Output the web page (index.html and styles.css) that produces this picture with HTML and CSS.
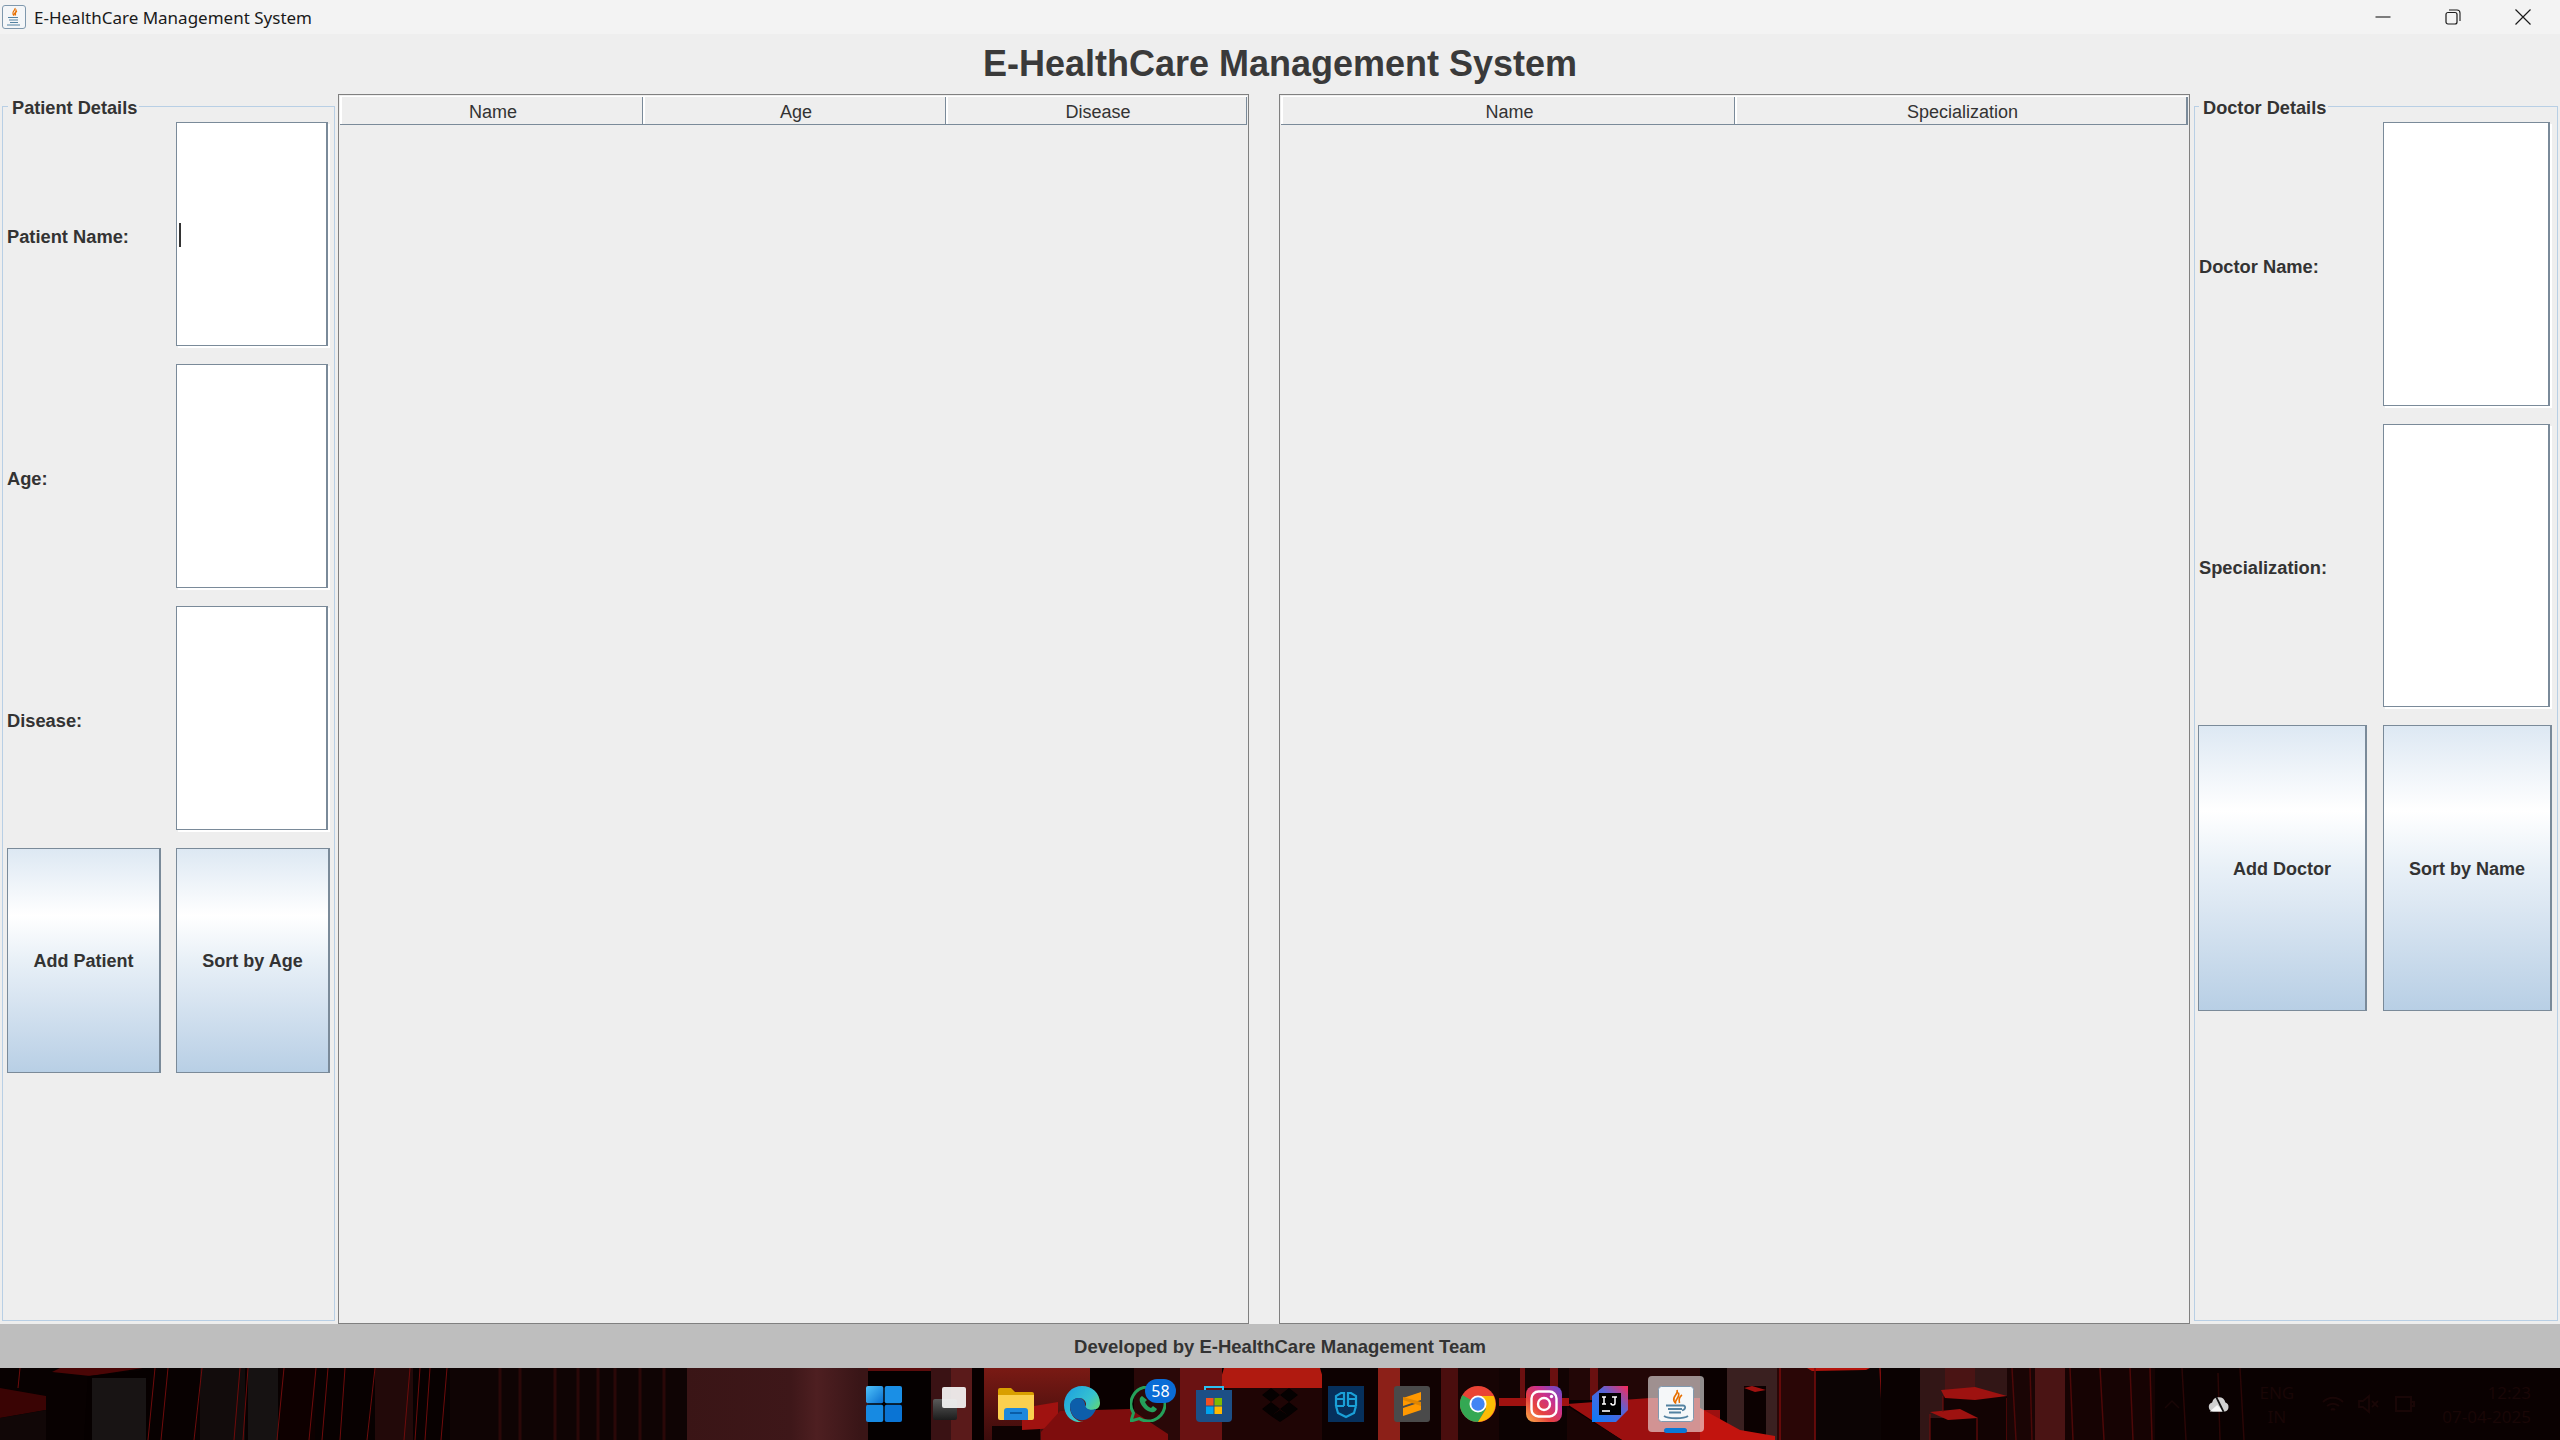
FILE: index.html
```html
<!DOCTYPE html>
<html lang="en">
<head>
<meta charset="utf-8">
<title>E-HealthCare Management System</title>
<link rel="stylesheet" href="styles.css">
</head>
<body>
<div class="window">
  <header class="titlebar">
    <div class="title-left">
      <svg class="app-icon" viewBox="0 0 24 24"><rect x=".5" y=".5" width="23" height="23" rx="2.500" fill="#f4f6f8" stroke="#7f98ad" stroke-width="1"/><path d="M13 3c1 2-3 3-2 6 .3 1 1 1.500 1 1.500-1-2 3-3 2-6M15 6c-2 1-2 2-1.500 4.500" fill="none" stroke="#e76f00" stroke-width="1.200"/><path d="M6 12.500h10M7 15h9M8 17.500h8M5 20h13" stroke="#5382a1" stroke-width="1.200"/></svg>
      <span>E-HealthCare Management System</span>
    </div>
    <div class="win-controls">
      <svg viewBox="0 0 16 16"><path d="M.5 8h15" stroke="#1a1a1a" stroke-width="1.100"/></svg>
      <svg viewBox="0 0 16 16"><rect x="1" y="3.500" width="11" height="11.500" rx="2" fill="none" stroke="#1a1a1a" stroke-width="1.200"/><path d="M4 1h8a3 3 0 0 1 3 3v8" fill="none" stroke="#1a1a1a" stroke-width="1.100"/></svg>
      <svg viewBox="0 0 16 16"><path d="M.5.500l15 15M15.500.500l-15 15" stroke="#1a1a1a" stroke-width="1.200"/></svg>
    </div>
  </header>

  <h1 class="heading">E-HealthCare Management System</h1>

  <main class="content">
    <section class="panel panel-patient">
      <div class="legend legend-left">Patient Details</div>
      <div class="form form-patient">
        <label class="lbl">Patient Name:</label><div class="field"><i class="caret"></i></div>
        <label class="lbl">Age:</label><div class="field"></div>
        <label class="lbl">Disease:</label><div class="field"></div>
        <button class="btn">Add Patient</button><button class="btn">Sort by Age</button>
      </div>
    </section>

    <section class="table-pane">
      <div class="thead thead-3"><div class="th">Name</div><div class="th">Age</div><div class="th">Disease</div></div>
    </section>

    <section class="table-pane table-right">
      <div class="thead thead-2"><div class="th">Name</div><div class="th">Specialization</div></div>
    </section>

    <section class="panel panel-doctor">
      <div class="legend legend-right">Doctor Details</div>
      <div class="form form-doctor">
        <label class="lbl">Doctor Name:</label><div class="field"></div>
        <label class="lbl">Specialization:</label><div class="field"></div>
        <button class="btn">Add Doctor</button><button class="btn">Sort by Name</button>
      </div>
    </section>
  </main>

  <footer class="statusbar">Developed by E-HealthCare Management Team</footer>

  <div class="taskbar">
    <svg class="wallpaper" viewBox="0 0 2560 72" preserveAspectRatio="none">
      <defs>
        <linearGradient id="gA" x1="0" y1="0" x2="1" y2="0"><stop offset="0" stop-color="#3a1516"/><stop offset=".6" stop-color="#3e1719"/><stop offset=".75" stop-color="#4e1f21"/><stop offset="1" stop-color="#391517"/></linearGradient>
        <linearGradient id="gB" x1="0" y1="0" x2="0" y2="1"><stop offset="0" stop-color="#7a1a14"/><stop offset="1" stop-color="#3c0c0c"/></linearGradient>
      </defs>
      <rect width="2560" height="72" fill="#080101"/>
      <polygon points="60,0 143,0 90,8 52,4" fill="#4a0606"/>
      <polygon points="0,20 46,28 46,42 0,50" fill="#3a0404"/>
      <polygon points="0,50 46,42 46,72 0,72" fill="#110707"/>
      <polygon points="88,8 150,2 150,72 84,72" fill="#060000"/>
      <rect x="92" y="10" width="54" height="62" fill="#181414"/>
      <rect x="200" width="45" height="72" fill="#120c0c"/>
      <rect x="248" width="30" height="72" fill="#161212"/>
      <rect x="280" width="35" height="72" fill="#0e0000"/>
      <rect x="375" width="38" height="72" fill="#220909"/>
      <path d="M20 0l-2 20M155 0l-7 72M168 0l-7 72M202 0l-8 72M240 0l-6 72M248 0l-5 72M284 0l-7 72M316 0l-7 72M328 0l-6 72M345 0l-5 72M375 0l-8 72M410 0l-6 72M420 0l-5 72M430 0l-5 72M447 0l-6 72" stroke="#6e0c0c" stroke-width="1"/>
      <rect x="450" width="237" height="72" fill="#0f0404"/>
      <path d="M500 0v72M520 0v72M555 0v72M578 0v72M598 0v72M615 0v72M640 0v72M664 0v72" stroke="#2a0808" stroke-width="3"/>
      <rect x="687" width="173" height="72" fill="url(#gA)"/>
      <rect x="860" width="72" height="72" fill="#3a1516"/>
      <polygon points="868,3 931,3 931,72 868,72" fill="#050000"/>
      <polygon points="868,0 950,0 931,3 868,3" fill="#5c0c0c"/>
      <rect x="931" width="20" height="72" fill="#3a1214"/>
      <rect x="951" width="21" height="72" fill="#5a1a1a"/>
      <rect x="972" width="12" height="72" fill="#080000"/>
      <rect x="984" width="106" height="72" fill="url(#gB)"/>
      <rect x="992" y="58" width="48" height="14" fill="#0e0202"/>
      <polygon points="1022,40 1058,34 1058,60 1022,62" fill="#a01210"/>
      <rect x="1090" width="44" height="43" fill="#0a0000"/>
      <rect x="1134" width="88" height="72" fill="#2a0808"/>
      <polygon points="1041,64 1060,43 1130,41 1168,66 1168,72 1041,72" fill="#7e0d0d"/>
      <rect x="1222" y="20" width="100" height="52" fill="#1f0505"/>
      <polygon points="1224,0 1320,0 1326,20 1218,20" fill="#b01a10"/>
      <rect x="1180" width="42" height="72" fill="#6a1212"/>
      <rect x="1322" width="56" height="72" fill="#0d0101"/>
      <rect x="1378" width="22" height="72" fill="#8c2018"/>
      <rect x="1400" width="41" height="72" fill="#110202"/>
      <rect x="1441" width="17" height="72" fill="#4a0e0e"/>
      <rect x="1458" width="41" height="72" fill="#170404"/>
      <rect x="1499" width="70" height="30" fill="#120303"/>
      <rect x="1520" width="5" height="30" fill="#6a1010"/>
      <rect x="1550" width="8" height="30" fill="#6a1010"/>
      <rect x="1499" y="30" width="70" height="8" fill="#a01210"/>
      <rect x="1499" y="38" width="70" height="34" fill="#0c0202"/>
      <rect x="1569" width="81" height="32" fill="#220606"/>
      <rect x="1590" width="8" height="32" fill="#6a1010"/>
      <rect x="1650" width="50" height="32" fill="#2a0a0a"/>
      <polygon points="1567,36 1650,30 1720,30 1720,72 1622,72" fill="#9c1010"/>
      <polygon points="1567,38 1622,72 1567,72" fill="#1a0404"/>
      <rect x="1700" width="27" height="42" fill="#0a0000"/>
      <rect x="1727" width="50" height="72" fill="#3a2020"/>
      <rect x="1744" y="18" width="22" height="50" fill="#0c0101"/>
      <polygon points="1744,20 1752,18 1766,22 1755,24" fill="#a01210"/>
      <polygon points="1700,40 1740,62 1775,68 1775,72 1700,72" fill="#c2140e"/>
      <rect x="1777" width="38" height="72" fill="#2a0606"/>
      <rect x="1815" width="66" height="72" fill="#0c0404"/>
      <polygon points="1807,0 1870,0 1866,2 1812,3" fill="#b5140c"/>
      <path d="M1780 0v72M1815 0v72M1880 0l4 72" stroke="#7a0c0c" stroke-width="1.500"/>
      <rect x="1881" width="39" height="72" fill="#0a0101"/>
      <rect x="1920" width="87" height="72" fill="#321616"/>
      <rect x="1945" width="30" height="30" fill="#4a1414"/>
      <polygon points="1943,28 2007,28 2007,72 1943,72" fill="#120303"/>
      <polygon points="1941,22 1975,19 2007,28 1975,32 1945,30" fill="#9e1210"/>
      <rect x="1930" y="50" width="47" height="22" fill="#0e0202"/>
      <polygon points="1930,44 1960,41 1978,50 1948,52" fill="#9e1210"/>
      <path d="M1930 46v26M1943 28v16M2007 30v42M1977 50v22" stroke="#7a0c0c" stroke-width="1"/>
      <rect x="2007" width="28" height="72" fill="#1a0505"/>
      <rect x="2035" width="30" height="72" fill="#4a1414"/>
      <rect x="2065" width="90" height="72" fill="#160303"/>
      <path d="M2012 0l4 72M2030 0l2 72M2070 0l3 72M2100 0l4 72M2130 0l3 72M2150 0l2 72" stroke="#4c0808" stroke-width="1.500"/>
      <rect x="2155" width="405" height="72" fill="#0a0101"/>
      <path d="M2182 0l4 72M2218 5l2 67M2240 0l4 72" stroke="#2a0606" stroke-width="1.500"/>
    </svg>

    <div class="tb-icons">
      <span class="tb"><svg viewBox="0 0 36 36"><defs><linearGradient id="w" x1="0" y1="0" x2="1" y2="1"><stop offset="0" stop-color="#4fc3fa"/><stop offset="1" stop-color="#0a6fd0"/></linearGradient></defs><rect x="0" y="0" width="17.300" height="17.300" rx="2" fill="url(#w)"/><rect x="18.700" y="0" width="17.300" height="17.300" rx="2" fill="#1a8fe6"/><rect x="0" y="18.700" width="17.300" height="17.300" rx="2" fill="#178ae2"/><rect x="18.700" y="18.700" width="17.300" height="17.300" rx="2" fill="#0a74d4"/></svg></span>
      <span class="tb"><svg viewBox="0 0 36 36"><defs><linearGradient id="tv" x1="0" y1="0" x2="0" y2="1"><stop offset="0" stop-color="#5a5a5a"/><stop offset="1" stop-color="#1c1c1c"/></linearGradient></defs><rect x="1" y="13" width="24" height="21" rx="2" fill="url(#tv)"/><rect x="10" y="1" width="24" height="21" rx="2" fill="#f5f5f5" opacity=".92"/></svg></span>
      <span class="tb"><svg viewBox="0 0 36 36"><path d="M0 4a2 2 0 0 1 2-2h11l4 4h17a2 2 0 0 1 2 2v6H0z" fill="#d99f00"/><path d="M0 9h36v23a2 2 0 0 1-2 2H2a2 2 0 0 1-2-2z" fill="#fbd04f"/><path d="M6 34v-9a3 3 0 0 1 3-3h18a3 3 0 0 1 3 3v9z" fill="#1e88dc"/><path d="M12 27h12" stroke="#0a5ca6" stroke-width="2"/></svg></span>
      <span class="tb"><svg viewBox="0 0 36 36"><defs><linearGradient id="e" x1="0" y1="0" x2="1" y2=".8"><stop offset="0" stop-color="#1b9de2"/><stop offset=".6" stop-color="#35c1d0"/><stop offset="1" stop-color="#6fdc58"/></linearGradient></defs><path d="M18 0c10 0 18 7 18 17 0 5-4 7-8 7-4 0-7-1-7-3 0-1 1-1 1-3 0-3-3-6-7-6-6 0-9 5-9 9 0 8 6 15 14 15-10 2-20-5-20-17C0 8 8 0 18 0z" fill="url(#e)"/><path d="M6 20c0-5 4-8 9-8 3 0 6 3 6 6 0 5 5 7 11 5-3 8-10 12-16 11C10 33 6 27 6 20z" fill="#0d5eaa"/></svg></span>
      <span class="tb"><svg viewBox="0 0 36 36"><path d="M18 1a17 17 0 0 0-14.500 26L1 35l8.300-2.400A17 17 0 1 0 18 1z" fill="none" stroke="#25a05a" stroke-width="3"/><path d="M12 10c-2 1-3 3-2 6 2 5 6 9 11 10 3 1 5-1 6-3l-4-3-2 2c-3-1-5-4-6-6l2-2z" fill="#25a05a"/></svg><b class="badge">58</b></span>
      <span class="tb"><svg viewBox="0 0 36 36"><path d="M9 6V1h18v5" fill="none" stroke="#2bc0f0" stroke-width="2"/><path d="M0 4h36v28a4 4 0 0 1-4 4H4a4 4 0 0 1-4-4z" fill="#1c4f86"/><rect x="10" y="12" width="7.500" height="7.500" fill="#f25022"/><rect x="18.500" y="12" width="7.500" height="7.500" fill="#7fba00"/><rect x="10" y="20.500" width="7.500" height="7.500" fill="#00a4ef"/><rect x="18.500" y="20.500" width="7.500" height="7.500" fill="#ffb900"/></svg></span>
      <span class="tb"><svg viewBox="0 0 36 36"><path d="M9 2L0 9l9 7 9-7zM27 2l-9 7 9 7 9-7zM0 23l9-7 9 7-9 7zM18 23l9-7 9 7-9 7zM9 30l9-6 9 6-9 6z" fill="#050101"/></svg></span>
      <span class="tb"><svg viewBox="0 0 36 36"><rect width="36" height="36" fill="#06305c"/><path d="M8 20V10l5-3h3v13M28 20V10l-5-3h-3v13M8 20h8M20 20h8M8 20l2 7 8 4 8-4 2-7M20 13h8M8 13h8" fill="none" stroke="#1aa0d8" stroke-width="2.200"/></svg></span>
      <span class="tb"><svg viewBox="0 0 36 36"><rect width="36" height="36" rx="3" fill="#4a4a4a"/><path d="M9 12l18-6v8L9 20zM27 16l-18 6v8l18-6z" fill="#ff9800"/><path d="M9 14l18 6v-4L9 11z" fill="#e08500"/></svg></span>
      <span class="tb"><svg viewBox="0 0 36 36"><circle cx="18" cy="18" r="18" fill="#ea4335"/><path d="M18 36A18 18 0 0 1 2.400 9L18 18l8 5z" fill="#34a853"/><path d="M18 10h15.600A18 18 0 0 1 18 36l8-13z" fill="#fbbc05"/><circle cx="18" cy="18" r="8.500" fill="#fff"/><circle cx="18" cy="18" r="6.700" fill="#4285f4"/></svg></span>
      <span class="tb"><svg viewBox="0 0 36 36"><defs><linearGradient id="ig" x1="0" y1="1" x2="1" y2="0"><stop offset="0" stop-color="#fdb44a"/><stop offset=".35" stop-color="#e6413e"/><stop offset=".65" stop-color="#c9308f"/><stop offset="1" stop-color="#5b51d8"/></linearGradient></defs><rect width="36" height="36" rx="8" fill="url(#ig)"/><rect x="5.500" y="5.500" width="25" height="25" rx="7" fill="none" stroke="#fff" stroke-width="2.400"/><circle cx="18" cy="18" r="6" fill="none" stroke="#fff" stroke-width="2.400"/><circle cx="25.500" cy="10.500" r="1.700" fill="#fff"/></svg></span>
      <span class="tb"><svg viewBox="0 0 36 36"><defs><linearGradient id="ij" x1="0" y1="1" x2="1" y2="0"><stop offset="0" stop-color="#087cfa"/><stop offset=".6" stop-color="#5a63d6"/><stop offset="1" stop-color="#fe2857"/></linearGradient></defs><path d="M12 0h24v24l-12 12H0V10z" fill="url(#ij)"/><rect x="7" y="7" width="22" height="22" fill="#000"/><path d="M10 25h8" stroke="#fff" stroke-width="1.600"/><path d="M10 11h4M12 11v7M10 18h4M20 11h5M23 11v6a2 2 0 0 1-4 0" fill="none" stroke="#fff" stroke-width="1.500"/></svg></span>
      <span class="tb tb-active"><svg viewBox="0 0 36 36"><rect x=".5" y=".5" width="35" height="35" rx="3" fill="#f5f7f9" stroke="#8099b0"/><path d="M19 4c2 4-5 6-3 11 .6 1.500 1.800 2.500 1.800 2.500-1.800-4 5-6 2.500-11M24 9c-3 2-3.500 4-2.500 8" fill="none" stroke="#e76f00" stroke-width="1.600"/><path d="M8 19.500h17c3 0 3 4-1 5M10 23h14M11 26.500h12M6 30c4 3 20 3 24 0" fill="none" stroke="#5382a1" stroke-width="1.800"/></svg></span>
    </div>

    <div class="tray">
      <svg class="tray-chev" viewBox="0 0 16 10"><path d="M1 9l7-7 7 7" fill="none" stroke="#190606" stroke-width="1.500"/></svg>
      <svg class="tray-cloud" viewBox="0 0 24 16"><path d="M5.500 15.500a5 5 0 0 1-1-9.800 7.500 7.500 0 0 1 14.500.2 5 5 0 0 1-.5 9.600z" fill="#d0d0d0"/><path d="M2 15.500l8-7 7 7z" fill="#f8f8f8"/><path d="M9 0l8 16" stroke="#111" stroke-width="2"/></svg>
      <div class="tray-lang"><span>ENG</span><span>IN</span></div>
      <div class="tray-sys">
        <svg viewBox="0 0 24 20"><path d="M2 8a14 14 0 0 1 20 0M6 12a9 9 0 0 1 12 0M10 16a3 3 0 0 1 4 0" fill="none" stroke="#190606" stroke-width="2"/></svg>
        <svg viewBox="0 0 24 20"><path d="M2 7h4l6-5v16l-6-5H2zM15 7l6 6M21 7l-6 6" fill="none" stroke="#190606" stroke-width="1.800"/></svg>
        <svg viewBox="0 0 24 20"><path d="M3 3h15v14H3zM18 8h3v4h-3" fill="none" stroke="#190606" stroke-width="2"/></svg>
      </div>
      <div class="tray-clock"><span>12:23</span><span>07-04-2025</span></div>
    </div>
  </div>
</div>
</body>
</html>
```

FILE: styles.css
```css
* { box-sizing: border-box; }
html, body { margin: 0; padding: 0; }
body { width: 2560px; height: 1440px; overflow: hidden; font-family: "Liberation Sans", Arial, sans-serif; color: #333; }

.window { display: flex; flex-direction: column; width: 2560px; height: 1440px; background: #eeeeee; }

.titlebar { flex: 0 0 34px; display: flex; align-items: center; justify-content: space-between; background: #f3f3f3; }
.title-left { display: flex; align-items: center; gap: 8px; padding-left: 2px; font: 17px "Noto Sans", "Open Sans", sans-serif; color: #1a1a1a; }
.app-icon { width: 24px; height: 24px; }
.win-controls { display: flex; align-items: center; gap: 54px; padding-right: 29px; }
.win-controls svg { width: 16px; height: 16px; display: block; }

.heading { flex: 0 0 60px; margin: 0; text-align: center; font-size: 36px; line-height: 60px; font-weight: 700; color: #3a3a3a; }

.content { flex: 1 1 auto; display: grid; grid-template-columns: 338px 911px 941px 370px; min-height: 0; }
.table-right { margin-left: 30px; }

.panel { position: relative; margin: 12px 0 3px 2px; border: 1px solid #b8cfe5; }
.panel-patient { margin-right: 3px; }
.panel-doctor { margin: 12px 2px 3px 4px; }

.legend { position: absolute; top: -9px; background: #eeeeee; padding: 0 2px 0 4px; font-size: 18.2px; line-height: 20px; font-weight: 700; color: #333; }
.legend-left { left: 5px; }
.legend-right { left: 4px; }

.form { display: grid; }
.form-patient { grid-template-columns: 154px 154px; grid-template-rows: 224px 224px 224px 225px; column-gap: 15px; row-gap: 18px; padding: 15px 0 0 4px; }
.form-doctor { grid-template-columns: 169px 169px; grid-template-rows: 284px 283px 286px; column-gap: 16px; row-gap: 18px; padding: 15px 0 0 3px; }

.lbl { align-self: center; font-size: 18.3px; font-weight: 700; color: #333; padding-top: 5px; }
.form-doctor .lbl { padding-left: 1px; }

.field { position: relative; background: #fff; border: 1px solid #7a8a99; border-right-width: 2px; margin-right: 2px; box-shadow: 2px 2px 0 #fff; }
.caret { position: absolute; left: 2px; top: 100px; width: 2px; height: 24px; background: #333; }

.btn { margin: 0; padding: 2px 0 0; font: 700 18px "Liberation Sans", Arial, sans-serif; color: #333; border: 1px solid #7a8a99; border-right-width: 2px; background: linear-gradient(to bottom, #dde8f3 0%, #ffffff 30%, #e8f0f7 50%, #dde8f3 62%, #b8cfe5 100%); }

.table-pane { border: 1px solid #808080; padding: 1px 1px 0 1px; background: #eeeeee; }
.thead { display: grid; height: 29px; border-top: 1px solid #fff; border-bottom: 1px solid #7a8a99; }
.thead-3 { grid-template-columns: 303px 303px 1fr; }
.thead-2 { grid-template-columns: 454px 1fr; }
.th { display: flex; align-items: center; justify-content: center; font-size: 18px; color: #333; border-left: 2px solid #fff; border-right: 1px solid #7a8a99; padding: 3px 0 0 2px; }
.table-right .th:last-child { border-right-width: 2px; }

.statusbar { flex: 0 0 44px; display: flex; align-items: center; justify-content: center; background: #bebebe; font-size: 18.5px; font-weight: 700; color: #333; padding-top: 2px; }

.taskbar { position: relative; flex: 0 0 72px; display: flex; align-items: center; justify-content: center; overflow: hidden; background: #080101; }
.wallpaper { position: absolute; inset: 0; width: 100%; height: 100%; }
.tb-icons { position: relative; display: flex; align-items: center; gap: 30px; }
.tb { position: relative; display: block; width: 36px; height: 36px; }
.tb svg { display: block; width: 36px; height: 36px; }
.badge { position: absolute; left: 15px; top: -7px; width: 31px; height: 24px; border-radius: 12px; background: #0a6cd6; color: #fff; font: 400 16px/24px "Noto Sans", sans-serif; text-align: center; }
.tb-active::before { content: ""; position: absolute; left: -10px; top: -10px; width: 56px; height: 56px; border-radius: 4px; background: rgba(255,255,255,.55); }
.tb-active::after { content: ""; position: absolute; left: 6px; top: 42px; width: 23px; height: 5px; border-radius: 3px; background: #0a78d6; }
.tb-active svg { position: relative; }

.tray { position: absolute; inset: 0 29px 0 auto; display: flex; align-items: center; }
.tray-chev { width: 16px; height: 10px; margin-right: 28px; }
.tray-cloud { width: 22px; height: 15px; margin-right: 30px; }
.tray-lang { display: flex; flex-direction: column; align-items: center; gap: 3px; margin-right: 27px; font: 17px/21px "Noto Sans", sans-serif; color: #190606; }
.tray-sys { display: flex; gap: 12px; margin-right: 25px; }
.tray-sys svg { width: 24px; height: 20px; }
.tray-clock { display: flex; flex-direction: column; align-items: flex-end; gap: 3px; font: 17px/21px "Noto Sans", sans-serif; color: #190606; }
```
